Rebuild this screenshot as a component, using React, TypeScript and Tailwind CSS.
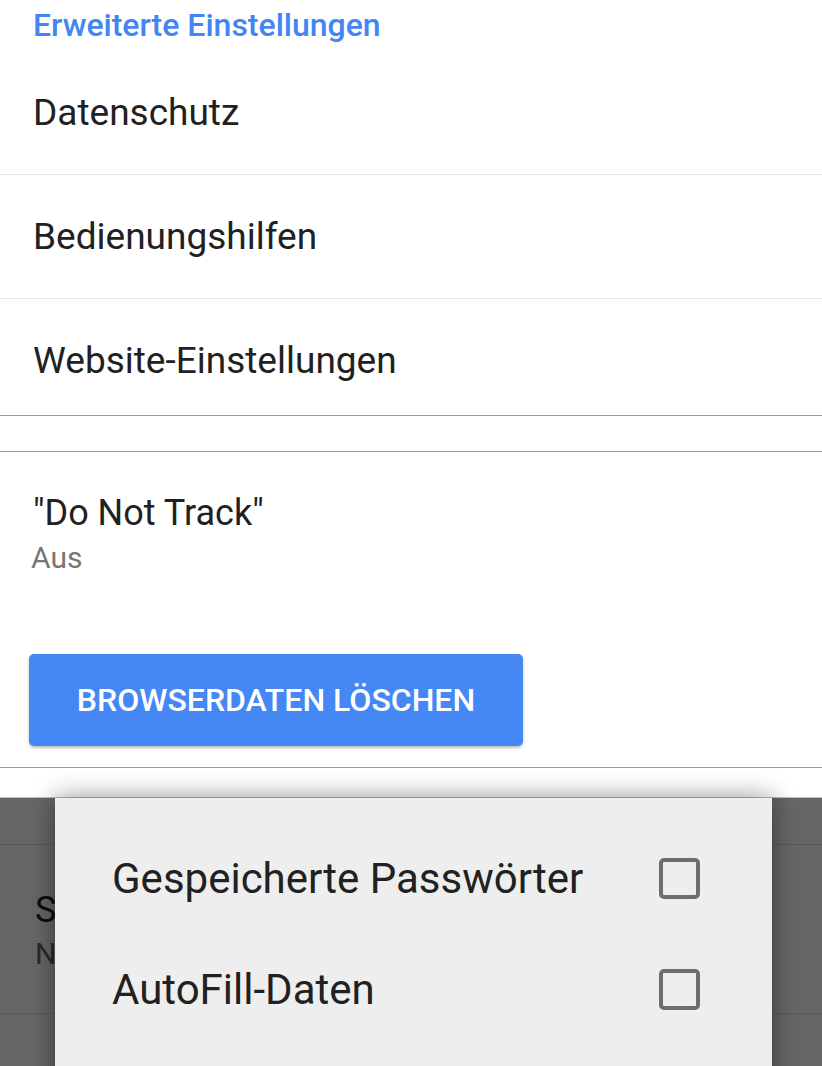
const rows = ["Datenschutz", "Bedienungshilfen", "Website-Einstellungen"];

const dialogOptions = ["Gespeicherte Passwörter", "AutoFill-Daten"];

function Checkbox() {
  return <div className="h-[41px] w-[41px] rounded-[5px] border-[4px] border-[#6e6e6e]" />;
}

export default function App() {
  return (
    <div className="relative h-[1066px] w-[822px] overflow-hidden bg-white font-['Roboto',sans-serif] text-[#212121]">
      <div className="flex h-[52px] items-center px-[33px] pb-[2px]">
        <span className="text-[32px] font-medium leading-[40px] text-[#4285f4]">Erweiterte Einstellungen</span>
      </div>

      {rows.map((label, i) => (
        <div
          key={label}
          className={
            i === 0
              ? "flex h-[123px] items-center border-b border-[#e6e6e6] px-[33px]"
              : i === 1
                ? "flex h-[124px] items-center border-b border-[#e6e6e6] px-[33px]"
                : "flex h-[117px] items-center border-b border-[#9a9a9a] px-[33px] pt-[8px]"
          }
        >
          <span className="text-[37px] leading-[44px]">{label}</span>
        </div>
      ))}

      <div className="h-[36px] border-b border-[#9a9a9a]" />

      <div className="flex flex-col items-start border-b border-[#9a9a9a] px-[29px] pt-[39px] pb-[21px]">
        <span className="px-[4px] text-[36px] leading-[44px]">"Do Not Track"</span>
        <span className="mt-[5px] px-[2px] text-[30px] leading-[36px] text-[#777777]">Aus</span>
        <button className="mt-[78px] flex h-[92px] w-[494px] items-center justify-center rounded-[5px] bg-[#4487f5] text-[32px] font-medium text-white shadow-[0_2px_3px_rgba(0,0,0,0.25)]">
          BROWSERDATEN LÖSCHEN
        </button>
      </div>

      <div className="h-[30px] border-b border-[#bdbdbd]" />

      <div className="relative h-[400px]">
        <div className="h-[47px] border-b border-[#e0e0e0]" />
        <div className="flex h-[169px] flex-col justify-center border-b border-[#e0e0e0] pt-[2px] pl-[35px]">
          <div className="w-[20px] overflow-hidden whitespace-nowrap text-[36px] leading-[44px]">Suchmaschine</div>
          <div className="mt-[4px] w-[20px] overflow-hidden whitespace-nowrap text-[30px] leading-[36px] text-[#666666]">Nicht festgelegt</div>
        </div>
        <div className="h-[120px] border-b border-[#e0e0e0]" />

        <div className="absolute inset-0 bg-black/60" />

        <div className="absolute top-0 bottom-0 left-[55px] flex w-[717px] flex-col bg-[#eeeeee] pt-[25px] pr-[72px] pl-[57px] shadow-[0_0_24px_rgba(0,0,0,0.45)]">
          {dialogOptions.map((option) => (
            <div key={option} className="flex h-[111px] items-center justify-between">
              <span className="text-[42px] leading-[50px] text-[#212121]">{option}</span>
              <Checkbox />
            </div>
          ))}
        </div>
      </div>
    </div>
  );
}
